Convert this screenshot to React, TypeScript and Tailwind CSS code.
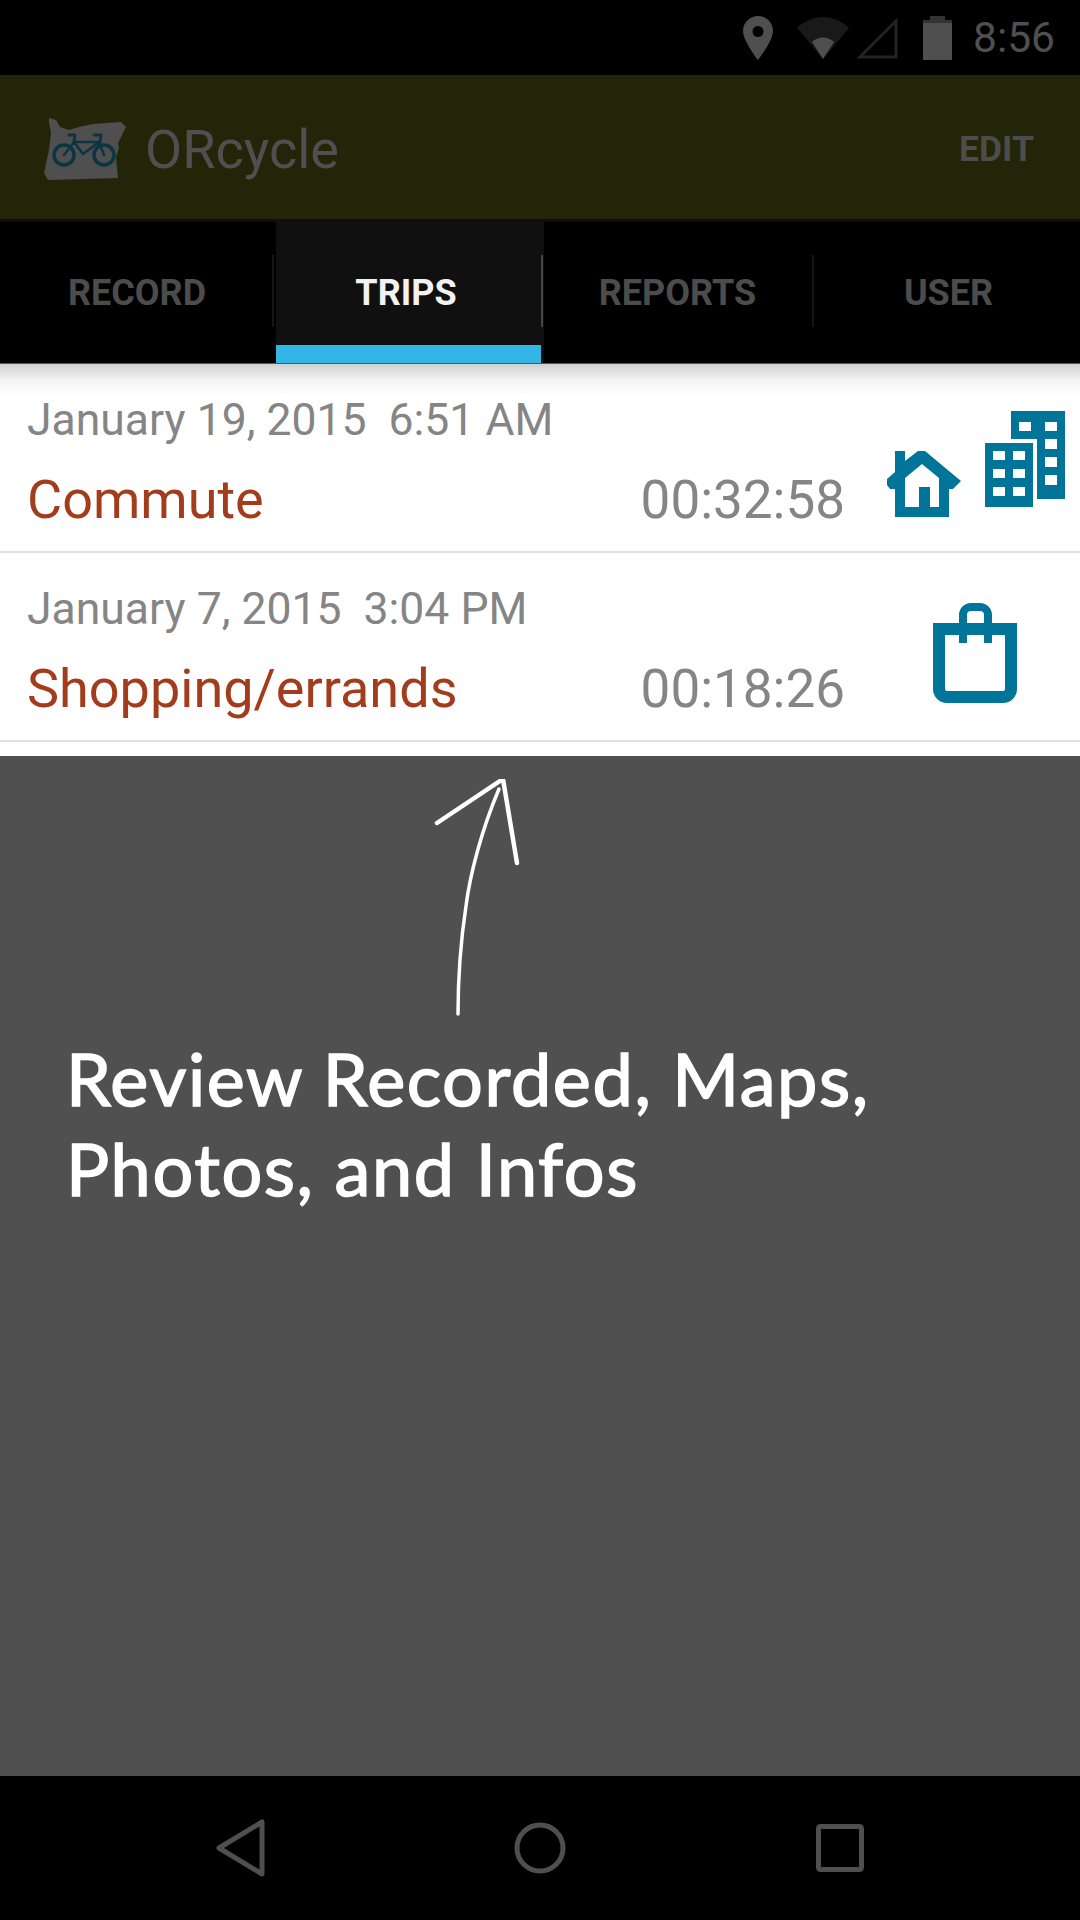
const ROBOTO = "font-['Roboto',sans-serif]";

function LocationIcon() {
  return (
    <svg width="30" height="44" viewBox="0 0 30 44" className="mr-[24px]">
      <path
        fillRule="evenodd"
        d="M15 0C7 0 0 6.500 0 15c0 10 15 29 15 29s15-19 15-29C30 6.500 23 0 15 0zm0 10a5.500 5.500 0 1 1 0 11 5.500 5.500 0 0 1 0-11z"
        fill="#4f4f4f"
      />
    </svg>
  );
}

function WifiIcon() {
  return (
    <svg width="52" height="42" viewBox="0 0 52 42" className="mr-[7px]">
      <path d="M0 11C7 4 16 0 26 0s19 4 26 11L26 42z" fill="#191919" />
      <path d="M15 25c3-3 7-4.500 11-4.500s8 1.500 11 4.500L26 42z" fill="#4f4f4f" />
    </svg>
  );
}

function SignalIcon() {
  return (
    <svg width="42" height="42" viewBox="0 0 42 42" className="mr-[25px]">
      <path d="M40 4v36H4z" fill="none" stroke="#222" strokeWidth="3" />
    </svg>
  );
}

function BatteryIcon() {
  return (
    <svg width="29" height="44" viewBox="0 0 29 44" className="mr-[21px]">
      <path d="M7 0h15v4h7v40H0V4h7z" fill="#4f4f4f" />
      <path d="M7 0h15v4H7zM0 4h29v3H0z" fill="#333" />
    </svg>
  );
}

function OregonLogo() {
  return (
    <svg width="84" height="64" viewBox="0 0 84 64" className="mr-[17px] mt-[6px]">
      <path
        d="M5 0l7 2 4 7 9 3 10-3 14-3 28-2 5 5-8 16 1 5-3 9 2 21-70 2-4-7 5-23 2-17-2-10z"
        fill="#4f4f4f"
      />
      <g fill="none" stroke="#0c3542" strokeLinecap="round" strokeLinejoin="round">
        <circle cx="20" cy="37" r="10" strokeWidth="3.500" />
        <circle cx="60" cy="37" r="10" strokeWidth="3.500" />
        <path d="M20 37l10-13h25l5 13M30 24l9 12 16-12" strokeWidth="2.500" />
        <path d="M25 17h6l-1 7M50 17h7l-1 7" strokeWidth="3" />
      </g>
    </svg>
  );
}

function HomeIcon() {
  return (
    <svg width="74" height="66" viewBox="0 0 74 66" className="mt-[87px]">
      <path
        fillRule="evenodd"
        d="M8 0h10v10L31 0h7l36 30-8 8h-4v28H8V38H3l-3-4v-6l8-7zm27 13L18 27v29h14V36h11v20h9V27z"
        fill="#007499"
      />
    </svg>
  );
}

function BuildingsIcon() {
  return (
    <svg width="80" height="96" viewBox="0 0 80 96" className="mt-[47px]">
      <path
        fillRule="evenodd"
        d="M26 0h54v88H52V28H26zm8 11v9h12v-9zm26 0v9h12v-9zm0 17v10h12V28zm0 18v10h12V46zm0 18v10h12V64z"
        fill="#007499"
      />
      <path
        fillRule="evenodd"
        d="M0 32h48v64H0zm8 8v9h12v-9zm20 0v9h12v-9zM8 58v9h12v-9zm20 0v9h12v-9zM8 76v9h12v-9zm20 0v9h12v-9z"
        fill="#007499"
      />
    </svg>
  );
}

function BagIcon() {
  return (
    <svg width="84" height="100" viewBox="0 0 84 100" className="mt-[50px] ml-[46px]">
      <path
        d="M6 26h72v60a8 8 0 0 1-8 8H14a8 8 0 0 1-8-8z"
        fill="none"
        stroke="#007499"
        strokeWidth="12"
      />
      <path
        d="M30 40V12a8 8 0 0 1 8-8h9a8 8 0 0 1 8 8v28"
        fill="none"
        stroke="#007499"
        strokeWidth="8"
      />
    </svg>
  );
}

function Tab({
  label,
  width,
  padding,
  active,
  divider,
}: {
  label: string;
  width: string;
  padding?: string;
  active?: boolean;
  divider?: string;
}) {
  return (
    <div
      className={`relative h-full flex items-center justify-center text-[36px] font-bold ${width} ${padding ?? ""} ${
        active ? "bg-[#101010] text-[#f2f2f2]" : "text-[#4c4c4c]"
      }`}
    >
      {label}
      {active && <div className="absolute left-0 right-[3px] bottom-0 h-[18px] bg-[#33b5e5]" />}
      {divider && <div className={`absolute right-[1px] top-[33px] w-[2px] h-[72px] ${divider}`} />}
    </div>
  );
}

function TripRow({
  date,
  title,
  time,
  children,
}: {
  date: string;
  title: string;
  time: string;
  children: React.ReactNode;
}) {
  return (
    <div className="flex h-[189px] border-b-2 border-[#dedede] pl-[27px]">
      <div className="w-[818px] pt-[31px] shrink-0">
        <div className="text-[44.500px] leading-[50px] text-[#858585] whitespace-pre">{date}</div>
        <div className="flex justify-between items-center mt-[23px]">
          <span className="text-[54px] leading-[64px] text-[#a33c1c]">{title}</span>
          <span className="text-[53px] leading-[64px] text-[#858585]">{time}</span>
        </div>
      </div>
      <div className="flex items-start pl-[42px] gap-[24px]">{children}</div>
    </div>
  );
}

export default function App() {
  return (
    <div className={`w-[1080px] h-[1920px] flex flex-col overflow-hidden bg-black ${ROBOTO}`}>
      {/* Status bar */}
      <div className="h-[75px] flex items-center justify-end pr-[25px] shrink-0">
        <LocationIcon />
        <WifiIcon />
        <SignalIcon />
        <BatteryIcon />
        <span className="text-[42.500px] text-[#4f4f4f]">8:56</span>
      </div>

      {/* Action bar */}
      <div className="h-[144px] bg-[#222507] flex items-center pl-[44px] pr-[46px] shrink-0">
        <OregonLogo />
        <span className="text-[54px] text-[#4f4f4f] mt-[4px]">ORcycle</span>
        <span className="ml-auto text-[35.500px] font-bold text-[#4c4c4c] mt-[6px]">EDIT</span>
      </div>

      {/* Tabs */}
      <div className="h-[145px] flex border-t-[3px] border-t-[#0e0e0e] border-b-[1px] border-b-[#555] shrink-0">
        <Tab label="RECORD" width="w-[276px]" padding="pr-[2px]" divider="bg-[#151515] mr-[1px]" />
        <Tab label="TRIPS" width="w-[268px]" padding="pr-[8px]" active divider="bg-[#444]" />
        <Tab label="REPORTS" width="w-[271px]" padding="pr-[4px]" divider="bg-[#151515]" />
        <Tab label="USER" width="flex-1" padding="pl-[2px]" />
      </div>

      {/* Trip list */}
      <div className="relative bg-white h-[392px] shrink-0">
        <div className="absolute top-0 left-0 right-0 h-[32px] bg-gradient-to-b from-[#d0d0d0] via-[#f3f3f3] to-white" />
        <div className="relative">
          <TripRow date="January 19, 2015  6:51 AM" title="Commute" time="00:32:58">
            <HomeIcon />
            <BuildingsIcon />
          </TripRow>
          <TripRow date="January 7, 2015  3:04 PM" title="Shopping/errands" time="00:18:26">
            <BagIcon />
          </TripRow>
        </div>
      </div>

      {/* Help overlay */}
      <div className="flex-1 bg-[#505050] pt-[23px] pl-[66px]">
        <svg width="100" height="240" viewBox="0 0 100 240" className="ml-[368px] block">
          <g fill="none" stroke="#fff" strokeLinecap="round" strokeLinejoin="round">
            <path d="M3 44L69 0l14 84" strokeWidth="4.500" />
            <path d="M24 235C24 190 27 160 32 127 36 95 48 50 65 10" strokeWidth="3.500" />
          </g>
        </svg>
        <div className="mt-[14px] text-[72px] leading-[90px] tracking-[1.600px] text-white font-['Lato',sans-serif] [-webkit-text-stroke:1.500px_white] whitespace-pre">
          {"Review Recorded, Maps,\nPhotos, and Infos"}
        </div>
      </div>

      {/* Nav bar */}
      <div className="h-[144px] flex items-center shrink-0">
        <svg width="52" height="60" viewBox="0 0 52 60" className="ml-[214px]">
          <path d="M48 4v52L5 30z" fill="none" stroke="#4f4f4f" strokeWidth="5" strokeLinejoin="round" />
        </svg>
        <svg width="52" height="52" viewBox="0 0 52 52" className="ml-[248px]">
          <circle cx="26" cy="26" r="23" fill="none" stroke="#4f4f4f" strokeWidth="5" />
        </svg>
        <svg width="48" height="48" viewBox="0 0 48 48" className="ml-[250px]">
          <rect x="2.500" y="2.500" width="43" height="43" rx="2" fill="none" stroke="#4f4f4f" strokeWidth="5" />
        </svg>
      </div>
    </div>
  );
}
